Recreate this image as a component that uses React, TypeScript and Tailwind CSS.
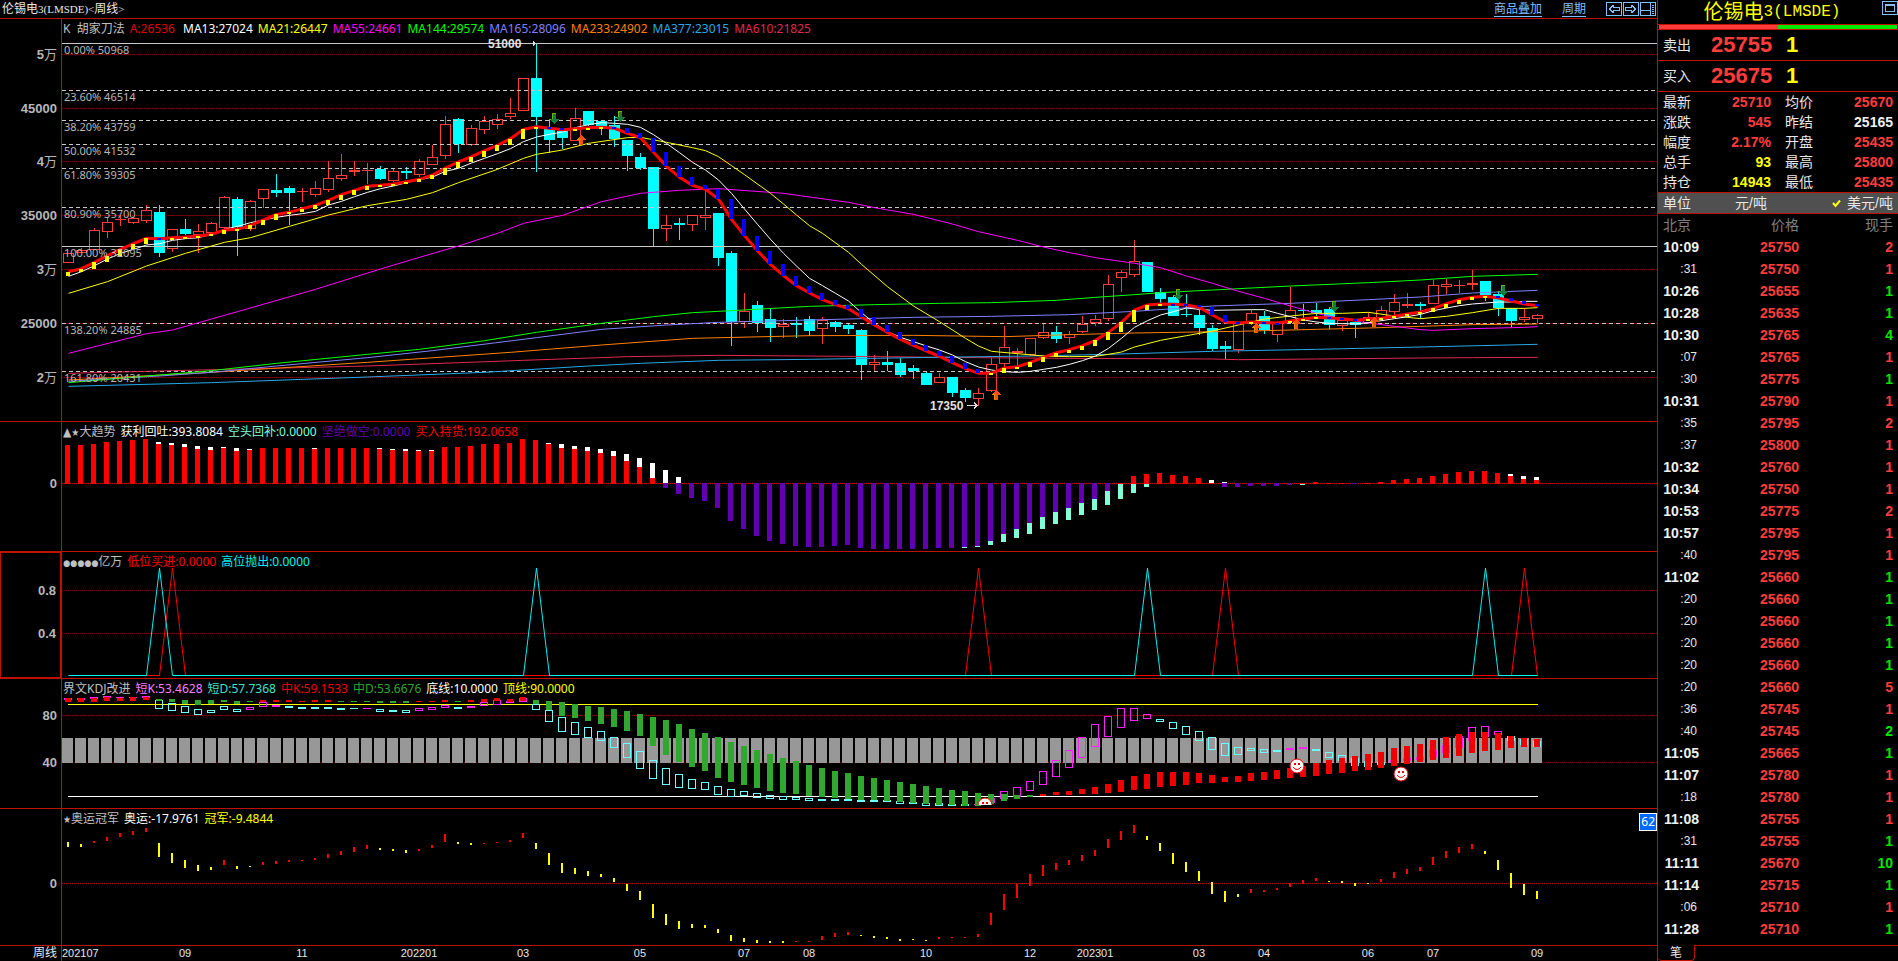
import type { ReactNode } from 'react';

/* Plot geometry: bar pitch along x, and y values kept in thirds of a pixel. */
const FIRST_X = 68;
const PITCH = 13;
const PLOT_LEFT = 62;
const PLOT_WIDTH = 1595;
const barX = (i: number) => FIRST_X + PITCH * i;
const px = (v: number) => Math.round(v / 3);

const parse = (s: string) =>
  s
    .trim()
    .split(/\s*,\s*/)
    .map((row) => {
      const [kind, ...rest] = row.split(' ');
      return { kind, v: rest.map(Number) };
    });

/* kind, high, body top, body bottom, low */
const CANDLES = parse(`r 760 760 788 788,r 745 751 758 758,r 684 691 751 751,r 655 667 695 714,r 645 658 661 678,r 650 655 668 671,
r 615 631 662 668,c 615 636 759 770,r 688 688 746 755,c 657 687 702 705,r 672 694 705 759,r 667 670 700 703,r 588 592 685 690,
c 592 597 680 768,r 600 604 688 692,r 568 568 598 624,c 522 570 579 591,c 558 564 578 675,r 564 573 577 606,r 543 565 584 591,
r 483 535 569 576,r 462 526 536 543,r 483 510 515 528,r 489 510 513 552,c 498 507 537 540,r 506 514 542 546,c 501 513 518 537,
r 477 484 524 531,r 435 472 494 494,r 348 373 467 477,c 354 357 432 459,r 375 385 436 438,r 348 364 391 402,r 342 358 374 387,
r 294 340 350 356,r 235 235 332 332,c 132 234 350 516,c 357 385 420 459,c 385 392 414 448,r 324 355 422 424,c 333 333 375 378,
c 363 363 382 405,c 348 375 417 441,c 420 420 468 513,c 459 471 504 510,c 501 501 687 741,r 645 676 686 723,c 654 669 675 720,
r 646 646 674 692,r 570 646 654 690,c 639 639 774 798,c 753 759 965 1038,r 879 932 966 984,c 903 915 969 996,c 927 957 984 1026,
r 957 972 980 1014,c 951 970 974 1014,c 948 957 993 1008,r 951 961 986 1032,c 963 966 981 996,c 969 975 987 1002,c 987 990 1095 1140,
r 1065 1087 1094 1113,c 1053 1086 1095 1113,c 1074 1089 1125 1131,c 1095 1104 1113 1137,c 1116 1119 1155 1155,r 1119 1132 1148 1148,
c 1131 1131 1179 1191,c 1164 1170 1194 1206,r 1164 1180 1196 1217,r 1074 1093 1172 1177,r 978 1042 1091 1105,r 1044 1054 1060 1100,
r 1013 1015 1066 1068,r 972 997 1013 1016,c 978 996 1017 1029,r 993 1003 1015 1032,r 948 973 995 999,r 945 958 968 977,
r 825 853 956 963,r 810 817 833 876,r 720 784 824 830,c 786 786 876 876,c 864 876 897 909,c 885 891 948 948,c 882 941 945 951,
c 930 945 984 1005,c 975 984 1047 1054,c 1023 1038 1047 1077,r 965 968 1049 1060,r 930 940 970 975,c 933 948 990 1002,
r 965 970 1004 1026,r 860 931 965 965,c 912 930 933 955,c 908 930 938 948,c 920 927 975 987,r 955 960 979 993,c 960 965 975 1014,
r 937 952 970 973,r 918 931 958 962,r 882 906 936 945,r 879 912 918 924,c 906 912 918 956,r 840 856 911 913,r 837 852 860 882,
r 840 855 857 880,r 810 850 855 870,c 843 843 886 903,c 874 882 924 948,c 924 924 963 982,r 925 951 960 966,r 942 946 958 969`);

const KNIFE = [
  815, 806, 787, 767, 748, 731, 715, 716, 713, 711, 708, 703, 690, 688, 676, 660, 643, 637, 626, 616, 601, 584, 571, 559, 556, 552,
  545, 538, 525, 504, 486, 470, 452, 436, 416, 388, 380, 385, 389, 386, 383, 382, 385, 400, 413, 457, 499, 532, 556, 568, 597, 658,
  707, 753, 793, 827, 857, 879, 899, 914, 926, 951, 975, 997, 1018, 1036, 1053, 1069, 1088, 1106, 1120, 1120, 1104, 1100, 1087, 1072,
  1058, 1049, 1037, 1021, 997, 967, 930, 915, 912, 913, 915, 922, 945, 966, 969, 966, 968, 969, 963, 957, 952, 954, 956, 961, 957,
  955, 949, 942, 936, 925, 911, 899, 892, 889, 894, 903, 912, 917,
];

/* Moving averages as index:value pairs. */
const AVERAGES = [
  {
    color: '#e02850',
    pts: '0:1120 8:1112 23:1098 35:1081 43:1070 50:1066 60:1069 70:1073 77:1075 88:1077 90:1079 96:1077 104:1074 108:1073 113:1072',
  },
  {
    color: '#28a8e8',
    pts: '0:1159 11:1148 23:1131 32:1117 40:1098 44:1090 50:1081 57:1078 65:1073 74:1068 80:1063 88:1054 96:1048 104:1041 113:1033',
  },
  {
    color: '#ff8000',
    pts: '0:1140 11:1117 23:1087 34:1057 41:1035 48:1015 57:1007 65:1006 72:1010 77:1004 82:999 90:994 96:988 100:984 104:979 108:974 113:972',
  },
  {
    color: '#8080ff',
    pts: '0:1144 7:1128 11:1117 16:1098 23:1073 28:1052 36:1013 41:988 46:975 50:967 55:962 62:955 65:952 71:949 77:944 82:934 88:918 94:910 100:899 104:891 108:879 113:871',
  },
  {
    color: '#00ff00',
    pts: '0:1148 7:1125 11:1112 16:1090 23:1063 27:1048 32:1022 36:997 41:970 45:950 48:938 51:932 57:919 62:914 67:910 71:908 76:901 79:892 82:884 84:878 88:870 94:858 100:848 104:840 108:829 113:823',
  },
  {
    color: '#ff00ff',
    pts: '0:1060 6:1001 8:990 13:935 19:868 24:807 27:772 30:738 33:700 35:670 38:646 41:605 44:580 47:571 50:566 55:580 57:591 60:607 62:623 65:643 68:672 70:695 73:721 75:741 77:758 79:773 82:790 84:803 86:828 88:850 90:874 92:895 94:918 96:940 98:957 100:969 102:979 104:989 105:991 108:986 112:982 113:980',
  },
  {
    color: '#ffff00',
    pts: '0:880 3:845 6:798 9:760 12:727 14:713 17:679 20:645 23:617 26:598 28:578 30:548 33:508 35:475 36:463 38:450 40:430 43:413 44:412 46:427 48:443 49:452 50:470 51:497 52:524 54:580 55:612 56:645 57:677 58:700 60:757 61:793 63:860 65:918 67:965 69:1015 70:1038 71:1054 73:1061 75:1068 77:1070 79:1069 80:1063 81:1056 82:1041 84:1021 86:1007 88:993 90:975 92:957 94:948 96:940 98:940 100:937 102:948 104:956 106:949 108:938 110:925 112:925 113:923',
  },
  {
    color: '#ffffff',
    pts: '0:829 1:815 2:797 3:777 4:760 5:748 6:735 7:731 8:721 9:716 10:713 11:703 12:688 13:679 14:668 15:660 16:652 17:646 18:641 19:634 20:615 21:604 22:590 23:577 24:566 25:558 26:548 27:539 28:531 29:514 30:505 31:489 32:475 33:461 34:446 35:425 36:411 37:403 38:396 39:383 40:374 41:368 42:370 43:373 44:382 45:404 46:430 47:458 48:487 49:510 50:540 51:580 52:627 53:673 54:718 55:760 56:798 57:835 58:857 59:880 60:903 61:938 62:970 63:995 64:1012 65:1025 66:1038 67:1050 68:1065 69:1085 70:1101 71:1110 72:1115 73:1117 74:1114 75:1108 76:1102 77:1093 78:1082 79:1068 80:1045 81:1015 82:982 83:962 84:945 85:935 86:924 87:928 88:931 91:929 92:929 93:940 94:950 95:960 96:966 97:970 99:972 100:968 101:962 102:956 103:950 104:943 105:932 106:924 107:917 108:912 109:909 110:906 111:906 112:904 113:904',
  },
];

const FIB = [
  { y: 43, label: '0.00% 50968', solid: true },
  { y: 90, label: '23.60% 46514' },
  { y: 120, label: '38.20% 43759' },
  { y: 144, label: '50.00% 41532' },
  { y: 168, label: '61.80% 39305' },
  { y: 207, label: '80.90% 35700' },
  { y: 246, label: '100.00% 32095', solid: true },
  { y: 323, label: '138.20% 24885' },
  { y: 371, label: '161.80% 20431' },
];

/* Trend histogram. r: red top; w: white top, red top; p: purple bottom; q: white top, purple bottom;
   g: purple bottom, mint bottom; m: red top, mint bottom */
const TREND = parse(`r 90,r 90,r 87,r 81,r 78,r 75,r 72,w 81 87,w 84 90,w 87 96,w 93 102,w 96 105,w 96 99,w 99 108,w 102 105,r 99,r 99,r 99,
r 99,w 99 102,r 99,r 99,r 99,r 99,w 99 102,w 102 105,w 102 108,w 105 108,w 105 108,r 96,r 96,r 93,r 87,r 87,r 84,r 72,r 75,w 84 87,
w 87 99,w 93 102,w 96 108,w 102 114,w 108 123,w 117 138,w 129 156,w 144 189,q 165 219,q 186 237,p 249,p 258,p 279,p 318,p 342,p 363,
p 378,p 387,p 393,p 396,p 396,p 393,p 390,p 399,p 402,p 402,p 402,p 402,p 402,p 399,p 399,g 396 399,g 393 396,g 378 390,g 357 381,
g 342 369,g 324 357,g 306 342,g 291 327,g 279 315,g 264 300,g 252 285,g 228 270,m 204 252,m 183 234,m 177 216,r 174,r 180,r 183,r 189,
w 195 204,q 201 216,p 216,p 213,p 213,p 213,p 210,m 204 210,r 201,r 204,r 204,p 207,r 204,r 201,r 195,r 192,r 189,r 183,r 177,r 171,
r 168,r 168,r 174,w 177 183,w 183 192,w 186 195`);

/* KDJ: first letter colours the filled bar, second the hollow one; filled top, bottom, hollow top, bottom */
const KDJ = parse(`rm 850 861 850 855,rm 850 861 850 855,rm 849 861 847 852,rm 846 858 844 850,rm 848 858 845 850,rm 847 858 845 850,rm 846 855 843 850,
gc 852 858 855 882,gc 852 861 865 887,gc 855 867 874 893,gc 855 870 882 899,gc 855 867 886 893,gc 855 861 874 884,gc 857 866 882 890,
gm 858 860 877 885,rm 855 861 862 875,rm 855 861 871 875,rc 855 861 874 878,rc 858 862 877 881,rc 855 861 877 881,rc 855 861 877 881,
gc 858 861 880 884,gc 858 860 880 881,gm 858 860 880 881,gc 858 864 883 890,gc 858 864 886 890,gc 858 864 886 893,rm 858 860 880 887,
rm 858 860 877 884,rm 855 861 869 878,gc 857 860 877 881,rm 855 861 874 878,rm 852 862 862 872,rm 849 858 856 869,rm 852 860 858 865,
rm 846 858 848 860,gc 855 867 868 884,gc 858 886 885 920,gc 861 903 907 950,gc 867 909 922 959,gc 873 918 937 968,gc 876 927 949 977,
gc 882 936 967 998,gc 888 948 985 1028,gc 897 963 1009 1061,gc 906 993 1036 1091,gc 915 1020 1060 1109,gc 927 1041 1078 1118,
gc 942 1056 1093 1121,gc 954 1068 1102 1124,gc 966 1089 1114 1139,gc 981 1101 1123 1145,gc 993 1110 1129 1142,gc 1005 1119 1135 1148,
gc 1017 1128 1141 1151,gc 1029 1134 1144 1154,gc 1038 1137 1147 1154,gc 1050 1144 1150 1157,gc 1059 1146 1153 1157,gc 1068 1149 1153 1157,
gc 1074 1152 1153 1157,gc 1083 1155 1156 1160,gc 1089 1155 1156 1160,gc 1095 1158 1156 1160,gc 1101 1161 1158 1166,gc 1107 1164 1161 1166,
gc 1113 1167 1165 1172,gc 1119 1170 1165 1172,gc 1125 1170 1168 1172,gc 1128 1172 1168 1172,gm 1134 1173 1168 1170,gm 1137 1167 1150 1163,
gm 1137 1158 1129 1151,gm 1140 1152 1117 1145,gm 1140 1145 1099 1127,rm 1137 1143 1069 1109,rm 1131 1140 1036 1085,rm 1128 1140 1006 1058,
rm 1122 1137 967 1028,rm 1116 1137 928 995,rm 1107 1134 904 965,rm 1095 1131 880 938,rm 1083 1125 880 917,rm 1077 1122 898 911,
rc 1071 1116 913 920,rc 1071 1113 922 941,rc 1071 1110 934 959,rc 1074 1104 949 977,rc 1080 1104 967 1004,rc 1086 1101 985 1022,
rc 1083 1101 997 1019,rc 1074 1098 1000 1007,rc 1071 1095 1003 1013,rc 1065 1092 1006 1010,rm 1059 1089 1000 1004,rm 1053 1086 997 1001,
rc 1044 1083 1003 1007,rc 1035 1077 1012 1028,rc 1029 1074 1021 1037,rc 1023 1068 1030 1052,rc 1017 1065 1039 1055,rc 1011 1059 1042 1049,
rm 999 1053 1036 1040,rm 993 1047 1030 1037,rm 987 1041 1027 1034,rm 975 1035 1006 1025,rm 966 1029 991 1013,rm 957 1023 964 998,
rm 951 1014 937 977,rm 951 1008 934 965,rm 954 1005 949 959,rc 963 999 964 977,rc 969 996 973 989,rc 972 996 979 995`);

const CHAMPION = parse(`y 126 141,y 132 141,r 123 129,r 111 123,r 99 111,r 93 105,r 84 96,y 129 171,y 159 189,y 180 204,y 195 213,y 201 210,
r 180 195,y 198 207,y 198 201,r 186 195,r 183 192,r 180 186,r 180 183,r 174 180,r 162 174,r 153 165,r 141 156,r 135 147,y 144 150,
y 147 153,y 150 159,r 147 153,r 135 144,r 102 126,y 126 132,y 129 135,r 129 132,r 126 129,r 120 126,r 99 114,y 129 147,y 159 195,
y 189 219,y 204 222,y 213 228,y 222 231,y 234 246,y 252 273,y 273 300,y 312 354,y 342 375,y 363 387,y 372 384,y 375 384,y 387 399,
y 405 423,y 414 426,y 420 429,y 423 429,y 423 429,r 423 426,r 423 426,r 408 420,r 399 411,r 396 405,y 405 408,y 408 414,y 411 417,
y 417 423,y 417 420,y 420 423,r 411 417,r 411 414,r 411 414,r 402 411,r 339 375,r 282 330,r 252 294,r 222 258,r 195 228,r 189 210,
r 180 195,r 165 183,r 150 168,r 117 144,r 93 120,r 75 99,y 108 120,y 129 153,y 159 192,y 186 216,y 213 243,y 246 282,y 273 306,
y 282 291,r 267 279,r 270 276,r 264 270,r 249 261,r 240 252,r 234 243,y 243 246,y 243 249,y 249 258,y 249 252,r 237 246,r 216 234,
r 207 222,r 201 213,r 171 195,r 153 174,r 141 159,r 132 147,y 153 162,y 180 210,y 219 264,y 252 285,y 273 297`);

const DATES = [
  { i: 9, t: '09' },
  { i: 18, t: '11' },
  { i: 27, t: '202201' },
  { i: 35, t: '03' },
  { i: 44, t: '05' },
  { i: 52, t: '07' },
  { i: 57, t: '08' },
  { i: 66, t: '10' },
  { i: 74, t: '12' },
  { i: 79, t: '202301' },
  { i: 87, t: '03' },
  { i: 92, t: '04' },
  { i: 100, t: '06' },
  { i: 105, t: '07' },
  { i: 113, t: '09' },
];

const QUOTES = [
  ['最新', '25710', 'text-[#ff3c3c]', '均价', '25670', 'text-[#ff3c3c]'],
  ['涨跌', '545', 'text-[#ff3c3c]', '昨结', '25165', 'text-[#f0f0f0]'],
  ['幅度', '2.17%', 'text-[#ff3c3c]', '开盘', '25435', 'text-[#ff3c3c]'],
  ['总手', '93', 'text-[#ffff00]', '最高', '25800', 'text-[#ff3c3c]'],
  ['持仓', '14943', 'text-[#ffff00]', '最低', '25435', 'text-[#ff3c3c]'],
];

/* time, price, lots, direction */
const TICKS = `10:09 25750 2 r,:31 25750 1 r,10:26 25655 1 g,10:28 25635 1 g,10:30 25765 4 g,:07 25765 1 r,:30 25775 1 g,10:31 25790 1 r,
:35 25795 2 r,:37 25800 1 r,10:32 25760 1 r,10:34 25750 1 r,10:53 25775 2 r,10:57 25795 1 r,:40 25795 1 r,11:02 25660 1 g,:20 25660 1 g,
:20 25660 1 g,:20 25660 1 g,:20 25660 1 g,:20 25660 5 r,:36 25745 1 r,:40 25745 2 g,11:05 25665 1 g,11:07 25780 1 r,:18 25780 1 r,
11:08 25755 1 r,:31 25755 1 g,11:11 25670 10 g,11:14 25715 1 g,:06 25710 1 r,11:28 25710 1 g`
  .split(/,\s*/)
  .map((r) => r.split(' '));

const FONT_LABEL = "font-['Noto_Sans','DejaVu_Sans_Condensed','Noto_Sans_CJK_SC',sans-serif]";
const FONT_NUM = "font-['Liberation_Sans','Noto_Sans_CJK_SC',sans-serif]";

function GridLine({ y, color = '#900000' }: { y: number; color?: string }) {
  return <line x1={PLOT_LEFT} x2={PLOT_LEFT + PLOT_WIDTH} y1={y + 0.5} y2={y + 0.5} stroke={color} strokeDasharray="1 1" />;
}

function Arrow({ x, y, up }: { x: number; y: number; up?: boolean }) {
  return up ? (
    <g>
      <path d={`M${x} ${y - 5}l5 5h-3v5h-4v-5h-3z`} fill="#ff5000" />
      <path d={`M${x - 1} ${y}v5h-1v-5h-3l2-2z`} fill="#e89000" />
    </g>
  ) : (
    <g>
      <path d={`M${x} ${y + 6}l5-5h-3v-6h-4v6h-3z`} fill="#108038" />
      <path d={`M${x - 2} ${y - 5}h4v1h-3v5h-3l1 1h-2l0-1h3z`} fill="#70b020" />
    </g>
  );
}

function Smiley({ x, y }: { x: number; y: number }) {
  return (
    <g>
      <circle cx={x} cy={y} r={7} fill="#fff" stroke="#f00000" strokeWidth={1} />
      <rect x={x - 3} y={y - 3} width={2} height={2} fill="#f00000" />
      <rect x={x + 1} y={y - 3} width={2} height={2} fill="#f00000" />
      <path d={`M${x - 4} ${y + 1}q4 5 8 0`} fill="none" stroke="#f00000" />
    </g>
  );
}

function MainPlot() {
  return (
    <>
      {[54, 108, 161, 215, 269, 323, 377].map((y) => (
        <GridLine key={y} y={y} />
      ))}
      {CANDLES.map(({ kind, v }, i) => {
        const x = barX(i);
        const [h, t, b, l] = v.map(px);
        return kind === 'c' ? (
          <g key={i} fill="#00ffff">
            <rect x={x} y={h} width={1} height={l - h} />
            <rect x={x - 5} y={t} width={11} height={Math.max(1, b - t)} />
          </g>
        ) : (
          <g key={i} stroke="#ff3c3c" fill="none">
            {t > h && <line x1={x + 0.5} x2={x + 0.5} y1={h} y2={t} />}
            {l > b && <line x1={x + 0.5} x2={x + 0.5} y1={b} y2={l} />}
            <rect x={x - 4.5} y={t + 0.5} width={10} height={Math.max(0.1, b - t - 1)} />
          </g>
        );
      })}
      {FIB.map((f) => (
        <line
          key={f.y}
          x1={PLOT_LEFT}
          x2={PLOT_LEFT + PLOT_WIDTH}
          y1={f.y + 0.5}
          y2={f.y + 0.5}
          stroke="#c8c8c8"
          strokeDasharray={f.solid ? undefined : '4 3'}
        />
      ))}
      <g shapeRendering="auto" fill="none">
        {AVERAGES.map((a) => (
          <polyline
            key={a.color}
            stroke={a.color}
            points={a.pts
              .split(' ')
              .map((p) => {
                const [i, y] = p.split(':').map(Number);
                return `${barX(i) + 0.5},${y / 3}`;
              })
              .join(' ')}
          />
        ))}
        <polyline stroke="#ff0000" strokeWidth={3} points={KNIFE.map((y, i) => `${barX(i) + 0.5},${y / 3}`).join(' ')} />
      </g>
      {KNIFE.map((y, i) => {
        const prev = i ? KNIFE[i - 1] : 828;
        const rising = y <= prev;
        const top = px(Math.min(y, prev));
        return (
          <rect
            key={i}
            x={barX(i) - 2}
            y={top}
            width={4}
            height={Math.max(2, px(Math.max(y, prev)) - top)}
            fill={rising ? '#ffff00' : '#0000ff'}
          />
        );
      })}
      <Arrow x={554} y={118} />
      <Arrow x={620} y={116} />
      <Arrow x={1178} y={294} />
      <Arrow x={1334} y={306} />
      <Arrow x={1503} y={290} />
      <Arrow x={581} y={140} up />
      <Arrow x={996} y={395} up />
      <Arrow x={1256} y={328} up />
      <Arrow x={1296} y={324} up />
      <Arrow x={1374} y={322} up />
      <path d="M967 405.500h11M974 402.500l3 3-3 3" stroke="#e0e0e0" fill="none" />
      <path d="M533.500 41v5M534.500 42v3" stroke="#e0e0e0" />
    </>
  );
}

function TrendPlot() {
  const zero = 483;
  const at = (v: number) => 415 + px(v);
  const bar = (x: number, t: number, b: number, fill: string) => (
    <rect x={x - 3} y={t} width={5} height={Math.max(1, b - t)} fill={fill} />
  );
  return (
    <>
      <GridLine y={zero} color="#d00000" />
      {TREND.map(({ kind, v }, i) => {
        const x = barX(i);
        const [a, b] = v.map(at);
        return (
          <g key={i}>
            {kind === 'r' && bar(x, a, zero + 1, '#ff0000')}
            {kind === 'w' && bar(x, a, b, '#ffffff')}
            {kind === 'w' && bar(x, b, zero + 1, '#ff0000')}
            {kind === 'p' && bar(x, zero, a, '#6000b0')}
            {kind === 'q' && bar(x, a, zero, '#ffffff')}
            {kind === 'q' && bar(x, zero, b, '#6000b0')}
            {kind === 'g' && bar(x, zero, a, '#6000b0')}
            {kind === 'g' && bar(x, a, b, '#80ffd8')}
            {kind === 'm' && bar(x, a, zero + 1, '#ff0000')}
            {kind === 'm' && bar(x, zero + 1, b, '#80ffd8')}
          </g>
        );
      })}
    </>
  );
}

function SignalPlot() {
  const path = (peaks: number[]) =>
    `M68.500 675.500` + peaks.map((i) => `H${barX(i - 1) + 0.5}L${barX(i) + 0.5} 568L${barX(i + 1) + 0.5} 675.500`).join('') + 'H1537.500';
  return (
    <>
      <GridLine y={590} />
      <GridLine y={633} />
      <g shapeRendering="auto" fill="none">
        <path d={path([8, 70, 89, 112])} stroke="#ff0000" />
        <path d={path([7, 36, 83, 109])} stroke="#00f0f0" />
      </g>
    </>
  );
}

function KdjPlot() {
  const at = (v: number) => 415 + px(v);
  return (
    <>
      <GridLine y={715} />
      <GridLine y={762} />
      {KDJ.map((_, i) => (
        <rect key={i} x={barX(i) - 6} y={738} width={11} height={25} fill="#989898" />
      ))}
      <rect x={68} y={704} width={1470} height={1} fill="#ffff00" />
      <rect x={68} y={796} width={1470} height={1} fill="#ffffff" />
      {KDJ.map(({ kind, v }, i) => {
        const x = barX(i);
        const [t, b, ht, hb] = v.map(at);
        return (
          <g key={i}>
            <rect
              x={x - 3.5}
              y={ht + 0.5}
              width={7}
              height={Math.max(0.1, hb - ht - 1)}
              fill="none"
              stroke={kind[1] === 'm' ? '#ff20ff' : '#70ffff'}
            />
            <rect x={x - 3} y={t} width={6} height={Math.max(1, b - t)} fill={kind[0] === 'r' ? '#f00000' : '#30a830'} />
          </g>
        );
      })}
      <g shapeRendering="auto">
        <Smiley x={1297} y={766} />
        <Smiley x={1401} y={774} />
        <svg x={975} y={790} width={20} height={15}>
          <Smiley x={10} y={15} />
        </svg>
      </g>
    </>
  );
}

function ChampionPlot() {
  return (
    <>
      <GridLine y={883} color="#c01000" />
      {CHAMPION.map(({ kind, v: [t, b] }, i) => (
        <rect
          key={i}
          x={barX(i) - 1}
          y={800 + px(t)}
          width={2}
          height={Math.max(1, px(b) - px(t))}
          fill={kind === 'r' ? '#ff0000' : '#ffff00'}
        />
      ))}
    </>
  );
}

type PanelProps = {
  top: number;
  height: number;
  ticks: { y: number; t: string; unit?: string }[];
  legend: { t: ReactNode; c: string }[];
  active?: boolean;
  name: string;
  plot: ReactNode;
  children?: ReactNode;
};

function Panel({ top, height, ticks, legend, active, name, plot, children }: PanelProps) {
  const pct = (y: number) => `${((y - top) / height) * 100}%`;
  return (
    <section aria-label={name} className="flex min-h-0 border-t border-[#c01000]">
      <div className={`relative w-[61px] shrink-0 ${active ? 'border border-[#c01000]' : ''}`}>
        {ticks.map((k) => (
          <span
            key={k.y}
            className={`absolute right-1 -translate-y-1/2 text-[13px] leading-4 font-bold whitespace-nowrap text-[#b8b8b8] ${FONT_NUM}`}
            style={{ top: pct(k.y) }}
          >
            {k.t}
            {k.unit && <span className="font-normal">{k.unit}</span>}
          </span>
        ))}
      </div>
      <div className="relative min-w-0 flex-1 overflow-hidden border-l border-[#c01000]">
        <svg
          className="absolute inset-0 h-full w-full"
          viewBox={`${PLOT_LEFT} ${top} ${PLOT_WIDTH} ${height}`}
          preserveAspectRatio="none"
          shapeRendering="crispEdges"
          aria-hidden="true"
        >
          {plot}
        </svg>
        <div className={`relative flex h-5 gap-[5px] whitespace-nowrap pl-px text-xs leading-5 ${FONT_LABEL}`}>
          {legend.map((l, i) => (
            <span key={i} className={l.c}>
              {l.t}
            </span>
          ))}
        </div>
        {children}
      </div>
    </section>
  );
}

function ArrowIcon({ flip }: { flip?: boolean }) {
  return (
    <svg width="16" height="15" viewBox="0 0 16 15" fill="none" stroke="#80c0ff" shapeRendering="crispEdges">
      <rect x="0.5" y="0.5" width="15" height="13" />
      <path
        d={flip ? 'M2.500 5.500h6v-2h1v1h1v1h1v1h1v1h-1v1h-1v1h-1v1h-1v-2h-6z' : 'M13.500 5.500h-6v-2h-1v1h-1v1h-1v1h-1v1h1v1h1v1h1v1h1v-2h6z'}
      />
    </svg>
  );
}

export default function App() {
  return (
    <div className={`flex h-screen overflow-hidden bg-black text-xs text-[#e8e8e8] ${FONT_LABEL}`}>
      <main className="flex min-w-0 flex-1 flex-col">
        <header className="flex h-[18px] shrink-0 items-center justify-between pl-0.5">
          <h1 className="flex items-center leading-4 font-['Liberation_Serif','Noto_Sans_CJK_SC',serif]">
            伦锡电<span className="text-[11px]">3(LMSDE)&lt;</span>周线<span className="text-[11px]">&gt;</span>
          </h1>
          <nav className="flex items-center gap-5 leading-4 text-[#80c0ff]">
            <a href="#overlay" className="border-b border-[#80c0ff] leading-3.5">
              商品叠加
            </a>
            <a href="#period" className="border-b border-[#80c0ff] leading-3.5">
              周期
            </a>
            <div className="flex gap-px pr-px">
              <button type="button" aria-label="后退">
                <ArrowIcon />
              </button>
              <button type="button" aria-label="前进">
                <ArrowIcon flip />
              </button>
              <button type="button" aria-label="布局">
                <svg width="16" height="15" viewBox="0 0 16 15" fill="none" stroke="#80c0ff" shapeRendering="crispEdges">
                  <rect x="0.5" y="0.5" width="15" height="13" />
                  <path d="M10.500 1v13M1 8.500h9M12 3.500h2M12 5.500h2M12 7.500h2M12 9.500h2M12 11.500h2" />
                </svg>
              </button>
            </div>
          </nav>
        </header>

        <div className="grid min-h-0 flex-1 grid-rows-[403fr_130fr_127fr_130fr_137fr]">
          <Panel
            name="K线"
            top={19}
            height={402}
            ticks={[
              { y: 55, t: '5', unit: '万' },
              { y: 109, t: '45000' },
              { y: 162, t: '4', unit: '万' },
              { y: 216, t: '35000' },
              { y: 270, t: '3', unit: '万' },
              { y: 324, t: '25000' },
              { y: 378, t: '2', unit: '万' },
            ]}
            legend={[
              { t: <>K&nbsp; 胡家刀法</>, c: 'text-[#c0c0c0]' },
              { t: <>A:26536&nbsp;</>, c: 'text-[#e00000]' },
              { t: 'MA13:27024', c: 'text-white' },
              { t: 'MA21:26447', c: 'text-[#ffff00]' },
              { t: 'MA55:24661', c: 'text-[#ff00ff]' },
              { t: 'MA144:29574', c: 'text-[#00ff00]' },
              { t: 'MA165:28096', c: 'text-[#8080ff]' },
              { t: 'MA233:24902', c: 'text-[#ff8000]' },
              { t: 'MA377:23015', c: 'text-[#28a8e8]' },
              { t: 'MA610:21825', c: 'text-[#e02850]' },
            ]}
            plot={<MainPlot />}
          >
            {FIB.map((f) => (
              <span
                key={f.y}
                className="absolute left-0.5 text-[11px] leading-3.5 text-[#b8b8b8]"
                style={{ top: `${((f.y - 19) / 402) * 100}%` }}
              >
                {f.label}
              </span>
            ))}
            <span
              className={`absolute -translate-y-1/2 text-xs leading-4 font-bold text-[#e0e0e0] ${FONT_NUM}`}
              style={{ left: `${((488 - 62) / PLOT_WIDTH) * 100}%`, top: `${((44 - 19) / 402) * 100}%` }}
            >
              51000
            </span>
            <span
              className={`absolute -translate-y-1/2 text-xs leading-4 font-bold text-[#e0e0e0] ${FONT_NUM}`}
              style={{ left: `${((930 - 62) / PLOT_WIDTH) * 100}%`, top: `${((406 - 19) / 402) * 100}%` }}
            >
              17350
            </span>
          </Panel>

          <Panel
            name="大趋势"
            top={422}
            height={129}
            ticks={[{ y: 484, t: '0' }]}
            legend={[
              {
                t: (
                  <>
                    ▲<span className="text-[10px]">★</span>大趋势
                  </>
                ),
                c: 'text-[#c0c0c0]',
              },
              { t: '获利回吐:393.8084', c: 'text-white' },
              { t: '空头回补:0.0000', c: 'text-[#80ffd8]' },
              { t: '坚绝做空:0.0000', c: 'text-[#6000b0]' },
              { t: '买入持货:192.0658', c: 'text-[#ff0000]' },
            ]}
            plot={<TrendPlot />}
          />

          <Panel
            name="亿万"
            top={552}
            height={126}
            active
            ticks={[
              { y: 591, t: '0.8' },
              { y: 634, t: '0.4' },
            ]}
            legend={[
              {
                t: (
                  <>
                    <span className="text-[9px]">●●●●●</span>亿万
                  </>
                ),
                c: 'text-[#c0c0c0]',
              },
              { t: '低位买进:0.0000', c: 'text-[#ff0000]' },
              { t: '高位抛出:0.0000', c: 'text-[#00f0f0]' },
            ]}
            plot={<SignalPlot />}
          />

          <Panel
            name="界文KDJ改进"
            top={679}
            height={129}
            ticks={[
              { y: 716, t: '80' },
              { y: 763, t: '40' },
            ]}
            legend={[
              { t: '界文KDJ改进', c: 'text-[#c0c0c0]' },
              { t: '短K:53.4628', c: 'text-[#f880ff]' },
              { t: '短D:57.7368', c: 'text-[#40e0d0]' },
              { t: '中K:59.1533', c: 'text-[#f00000]' },
              { t: '中D:53.6676', c: 'text-[#30a830]' },
              { t: '底线:10.0000', c: 'text-white' },
              { t: '顶线:90.0000', c: 'text-[#ffff00]' },
            ]}
            plot={<KdjPlot />}
          />

          <Panel
            name="奥运冠军"
            top={809}
            height={136}
            ticks={[{ y: 884, t: '0' }]}
            legend={[
              {
                t: (
                  <>
                    <span className="text-[10px]">★</span>奥运冠军
                  </>
                ),
                c: 'text-[#c0c0c0]',
              },
              { t: '奥运:-17.9761', c: 'text-white' },
              { t: '冠军:-9.4844', c: 'text-[#ffff00]' },
            ]}
            plot={<ChampionPlot />}
          >
            <span className="absolute top-1 right-0 border border-white bg-[#0068ff] px-px text-xs leading-4 text-white">62</span>
          </Panel>
        </div>

        <footer className="flex h-4 shrink-0 border-t border-[#c01000] leading-3.5 text-[#e8e8e8]">
          <div className="w-[61px] shrink-0 pr-1 text-right">周线</div>
          <div className={`relative flex-1 border-l border-[#c01000] text-[11px] ${FONT_NUM}`}>
            202107
            {DATES.map((d) => (
              <span
                key={d.i}
                className="absolute top-0 -translate-x-1/2"
                style={{ left: `${((barX(d.i) - PLOT_LEFT) / PLOT_WIDTH) * 100}%` }}
              >
                {d.t}
              </span>
            ))}
          </div>
        </footer>
      </main>

      <aside className={`flex w-[241px] shrink-0 flex-col border-l border-[#c01000] text-sm ${FONT_NUM}`}>
        <div className="flex h-6 shrink-0 items-center">
          <h2 className="flex flex-1 items-center justify-center pl-1 text-xl leading-6 text-[#ffff00]">
            伦锡电<span className="text-base leading-6 font-['Liberation_Mono',monospace]">3(LMSDE)</span>
          </h2>
          <button type="button" aria-label="窗口" className="self-start pt-px">
            <svg width="16" height="15" viewBox="0 0 16 15" fill="none" stroke="#80c0ff" shapeRendering="crispEdges">
              <rect x="0.5" y="0.5" width="15" height="13" />
              <rect x="3.500" y="3.500" width="9" height="7" />
              <path d="M3 4.500h10" />
            </svg>
          </button>
        </div>
        <div className="flex h-1.5 shrink-0 border-y border-[#c01000] px-px">
          <div className="flex-1 bg-[#ff3c3c]" />
          <div className="flex-1 bg-[#00e800]" />
        </div>
        {[
          ['卖出', '25755'],
          ['买入', '25675'],
        ].map(([label, price]) => (
          <div key={label} className="flex h-[31px] shrink-0 items-center border-b border-[#c01000] pl-[5px]">
            <span className="w-12">{label}</span>
            <span className="w-[61px] text-right text-[22px] font-bold text-[#ff3c3c]">{price}</span>
            <span className="pl-3.5 text-[22px] font-bold text-[#ffff00]">1</span>
          </div>
        ))}
        <dl className="grid shrink-0 grid-cols-[36px_72px_44px_1fr] pr-[5px] pl-[5px] leading-5 whitespace-nowrap">
          {QUOTES.map(([a, av, ac, b, bv, bc]) => (
            <div key={a} className="contents">
              <dt>{a}</dt>
              <dd className={`text-right font-bold ${ac}`}>{av}</dd>
              <dt className="pl-3.5">{b}</dt>
              <dd className={`text-right font-bold ${bc}`}>{bv}</dd>
            </div>
          ))}
        </dl>
        <div className="flex h-[22px] shrink-0 items-center border-y border-[#c01000] bg-[#505050] pr-[5px] pl-[5px] leading-5">
          <span className="w-[72px]">单位</span>
          <button type="button">元/吨</button>
          <button type="button" className="ml-auto flex items-center gap-1.5">
            <svg width="9" height="9" viewBox="0 0 9 9" fill="none" stroke="#ffff00" strokeWidth="2" aria-hidden="true">
              <path d="M1 4l2.500 3L8 1.500" />
            </svg>
            美元/吨
          </button>
        </div>
        <div className="min-h-0 flex-1 overflow-hidden">
          <table className="w-full table-fixed border-collapse">
            <colgroup>
              <col className="w-[41px]" />
              <col className="w-[100px]" />
              <col />
            </colgroup>
            <thead>
              <tr className="h-[22px] leading-5 text-[#808080]">
                <th className="pl-[5px] text-left font-normal whitespace-nowrap">北京</th>
                <th className="text-right font-normal">价格</th>
                <th className="pr-[5px] text-right font-normal">现手</th>
              </tr>
            </thead>
            <tbody>
              {TICKS.map(([time, price, lots, dir], i) => (
                <tr key={i} className="h-[22px] leading-5">
                  <td className={`text-right ${time.startsWith(':') ? 'pr-0.5 text-xs leading-5' : 'font-bold text-[#f0f0f0]'}`}>{time}</td>
                  <td className="text-right font-bold text-[#ff3c3c]">{price}</td>
                  <td className={`pr-[5px] text-right font-bold ${dir === 'r' ? 'text-[#ff3c3c]' : 'text-[#00e800]'}`}>{lots}</td>
                </tr>
              ))}
            </tbody>
          </table>
        </div>
        <div className="flex h-4 shrink-0" role="tablist">
          <button
            type="button"
            role="tab"
            aria-selected="true"
            className="w-[37px] rounded-b-sm border-r border-b border-[#c01000] text-xs leading-3.5"
          >
            笔
          </button>
          <div className="flex-1 border-t border-[#c01000]" />
        </div>
      </aside>
    </div>
  );
}
